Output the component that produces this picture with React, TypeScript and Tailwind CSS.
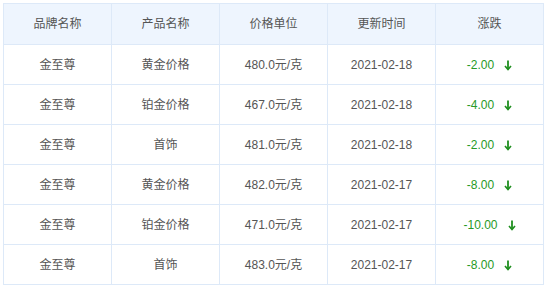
import { ReactNode } from 'react';

const rows = [
  { brand: '金至尊', product: '黄金价格', price: '480.0元/克', date: '2021-02-18', change: '-2.00' },
  { brand: '金至尊', product: '铂金价格', price: '467.0元/克', date: '2021-02-18', change: '-4.00' },
  { brand: '金至尊', product: '首饰', price: '481.0元/克', date: '2021-02-18', change: '-2.00' },
  { brand: '金至尊', product: '黄金价格', price: '482.0元/克', date: '2021-02-17', change: '-8.00' },
  { brand: '金至尊', product: '铂金价格', price: '471.0元/克', date: '2021-02-17', change: '-10.00' },
  { brand: '金至尊', product: '首饰', price: '483.0元/克', date: '2021-02-17', change: '-8.00' },
];

const headers = ['品牌名称', '产品名称', '价格单位', '更新时间', '涨跌'];

function Cell({ children, head }: { children: ReactNode; head?: boolean }) {
  return (
    <div
      className={`flex items-center justify-center border-r border-b border-[#dde9f8] ${
        head ? 'h-[41px] bg-[#eef5fe]' : 'h-[40px] bg-white'
      }`}
    >
      {children}
    </div>
  );
}

function DownArrow() {
  return (
    <svg width="8" height="11" viewBox="0 0 8 11" className="ml-[10px] mt-[2px]">
      <path d="M4 0.5V9" stroke="#1f8f1f" strokeWidth="1.8" />
      <path d="M1 6L4 9.5L7 6" fill="none" stroke="#1f8f1f" strokeWidth="1.6" />
    </svg>
  );
}

export default function App() {
  return (
    <div className="w-[550px] h-[291px] bg-white pt-[3px] pl-[3px] font-['Liberation_Sans','Noto_Sans_CJK_SC',sans-serif] text-[12px] text-[#555]">
      <div className="grid grid-cols-[repeat(5,108px)] w-[541px] border-l border-t border-[#dde9f8]">
        {headers.map((h) => (
          <Cell key={h} head>
            {h}
          </Cell>
        ))}
        {rows.map((r, i) => (
          <div key={i} className="contents">
            <Cell>{r.brand}</Cell>
            <Cell>{r.product}</Cell>
            <Cell>{r.price}</Cell>
            <Cell>{r.date}</Cell>
            <Cell>
              <span className="text-[#279a27]">{r.change}</span>
              <DownArrow />
            </Cell>
          </div>
        ))}
      </div>
    </div>
  );
}
